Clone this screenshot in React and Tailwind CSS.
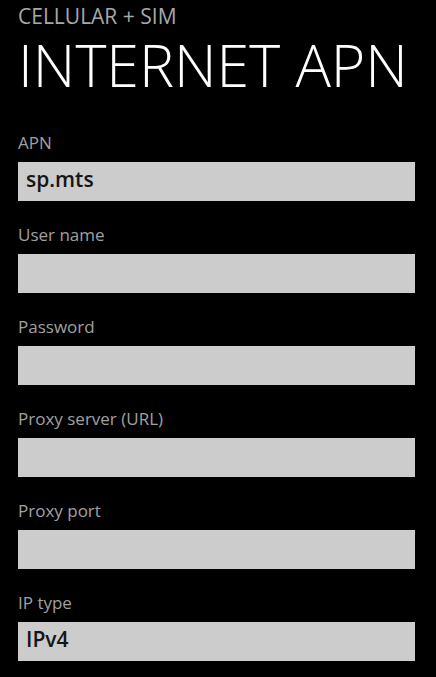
const fields = [
  { label: "APN", value: "sp.mts" },
  { label: "User name", value: "" },
  { label: "Password", value: "" },
  { label: "Proxy server (URL)", value: "" },
  { label: "Proxy port", value: "" },
  { label: "IP type", value: "IPv4" },
];

export default function App() {
  return (
    <div
      className="h-[677px] w-full overflow-hidden bg-black px-[18px] pt-[3px]"
      style={{ fontFamily: '"Open Sans", "Noto Sans", sans-serif' }}
    >
      {/* Page header */}
      <div className="text-[21px] leading-[27px] text-[#a8a8a8]">CELLULAR + SIM</div>
      <h1 className="mt-[4px] text-[59px] font-light leading-[60px] text-white">INTERNET APN</h1>

      {/* Fields */}
      <div className="mt-[37px] flex flex-col gap-[22px]">
        {fields.map((f) => (
          <div key={f.label}>
            <div className="mb-[7px] text-[17px] leading-[24px] text-[#a0a0a0]">{f.label}</div>
            <div className="h-[39px] w-[397px] bg-[#cccccc] pl-[8px] pt-[3px] text-[21px] font-semibold leading-[28px] text-[#151515]">
              {f.value}
            </div>
          </div>
        ))}
      </div>
    </div>
  );
}
